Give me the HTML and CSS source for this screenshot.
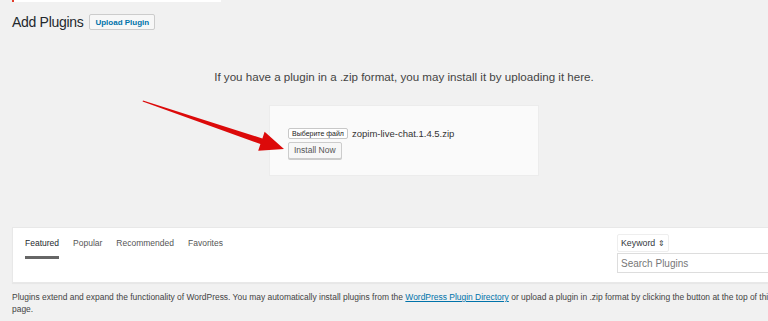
FILE: index.html
```html
<!DOCTYPE html>
<html lang="en">
<head>
    <meta charset="UTF-8">
    <meta name="viewport" content="width=device-width, initial-scale=1.0">
    <title>Add Plugins</title>
    <link rel="stylesheet" href="styles.css">
</head>
<body>
    <div class="wrap">
        <div class="notice-strip"><span class="notice-mark"></span></div>

        <div class="page-head">
            <h1>Add Plugins</h1>
            <a href="#" class="add-new">Upload Plugin</a>
        </div>

        <p class="install-help">If you have a plugin in a .zip format, you may install it by uploading it here.</p>

        <div class="upload-plugin">
            <form class="upload-form">
                <div class="file-row">
                    <span class="file-btn">Выберите файл</span>
                    <span class="file-name">zopim-live-chat.1.4.5.zip</span>
                </div>
                <button type="button" class="install-btn">Install Now</button>
            </form>
        </div>

        <div class="filter-bar">
            <ul class="filter-links">
                <li class="current">Featured</li>
                <li>Popular</li>
                <li>Recommended</li>
                <li>Favorites</li>
            </ul>
            <div class="search-form">
                <span class="search-type">Keyword <span class="arrows">&#8661;</span></span>
                <input type="search" class="search-input" placeholder="Search Plugins">
            </div>
        </div>

        <p class="plugins-desc">Plugins extend and expand the functionality of WordPress. You may automatically install plugins from the <a href="#">WordPress Plugin Directory</a> or upload a plugin in .zip format by clicking the button at the top of this page.</p>
    </div>

    <!-- annotation arrow drawn over the screenshot -->
    <svg class="callout" width="768" height="321" viewBox="0 0 768 321">
        <polygon points="143,100.5 262.4,138.5 264.6,131.8 284,149 258.2,150.8 260.4,144.1 142.6,101.5" fill="#dc0a0a"/>
    </svg>
</body>
</html>
```

FILE: styles.css
```css
body {
    margin: 0;
    background-color: #f1f1f1;
    color: #444;
    font-family: "Liberation Sans", Arial, sans-serif;
    overflow: hidden;
    width: 768px;
    height: 321px;
    position: relative;
}

.wrap {
    width: 796px;
    padding-left: 12px;
    box-sizing: border-box;
}

.notice-strip {
    width: 209px;
    height: 2px;
    background-color: #fff;
}

.notice-mark {
    display: block;
    width: 2px;
    height: 2px;
    background-color: #e23b2a;
}

.page-head {
    display: flex;
    align-items: center;
    gap: 6px;
    margin-top: 12px;
    height: 16px;
}

h1 {
    margin: 0;
    font-size: 14px;
    font-weight: 400;
    color: #23282d;
    letter-spacing: -0.3px;
}

.add-new {
    display: inline-block;
    padding: 0 5px;
    height: 16px;
    line-height: 15px;
    box-sizing: border-box;
    border: 1px solid #ccc;
    border-radius: 2px;
    background-color: #f7f7f7;
    color: #0073aa;
    font-size: 8px;
    font-weight: 700;
    text-decoration: none;
}

.install-help {
    margin: 40px 0 0;
    text-align: center;
    font-size: 11.6px;
    line-height: 14px;
    color: #444;
}

.upload-plugin {
    text-align: center;
    margin-top: 21px;
}

.upload-form {
    display: inline-block;
    width: 270px;
    height: 71px;
    box-sizing: border-box;
    padding: 21px 18px 0;
    background-color: #fafafa;
    border: 1px solid #ececec;
    text-align: left;
}

.file-row {
    display: flex;
    align-items: center;
    gap: 4px;
    height: 12px;
}

.file-btn {
    display: inline-block;
    height: 11px;
    line-height: 10px;
    padding: 0 3px;
    box-sizing: border-box;
    border: 1px solid #c8c8c8;
    border-radius: 2px;
    background-color: #fff;
    font-size: 7px;
    color: #222;
}

.file-name {
    font-size: 9.5px;
    color: #333;
}

.install-btn {
    margin-top: 2px;
    height: 17px;
    padding: 0 5px;
    border: 1px solid #ccc;
    border-radius: 2px;
    background-color: #f7f7f7;
    box-shadow: 0 1px 0 #ccc;
    font-family: inherit;
    font-size: 8.5px;
    color: #555;
}

.filter-bar {
    display: flex;
    justify-content: space-between;
    margin-top: 51px;
    height: 56px;
    box-sizing: border-box;
    background-color: #fff;
    border: 1px solid #e8e8e8;
    box-shadow: 0 1px 1px rgba(0, 0, 0, 0.04);
}

.filter-links {
    display: flex;
    gap: 14px;
    margin: 0;
    padding: 0 0 0 12px;
    list-style: none;
}

.filter-links li {
    height: 31px;
    padding-top: 10px;
    box-sizing: border-box;
    font-size: 8.5px;
    color: #555;
    border-bottom: 3px solid transparent;
}

.filter-links li.current {
    color: #23282d;
    border-bottom-color: #666;
}

.search-form {
    display: flex;
    flex-direction: column;
    gap: 1px;
    width: 178px;
    padding-top: 6px;
}

.search-type {
    align-self: flex-start;
    height: 18px;
    line-height: 17px;
    padding: 0 3px;
    box-sizing: border-box;
    border: 1px solid #eee;
    border-radius: 2px;
    font-size: 8.8px;
    color: #32373c;
}

.arrows {
    font-size: 7.5px;
}

.search-input {
    width: 170px;
    height: 20px;
    margin: 0;
    padding: 0 3px;
    box-sizing: border-box;
    border: 1px solid #ddd;
    font-family: inherit;
    font-size: 10px;
}

.search-input::placeholder {
    color: #777;
}

.plugins-desc {
    width: 774px;
    margin: 8px 0 0;
    font-size: 8.45px;
    line-height: 12px;
    color: #444;
}

.plugins-desc a {
    color: #0073aa;
}

.callout {
    position: absolute;
    left: 0;
    top: 0;
    pointer-events: none;
}
```
